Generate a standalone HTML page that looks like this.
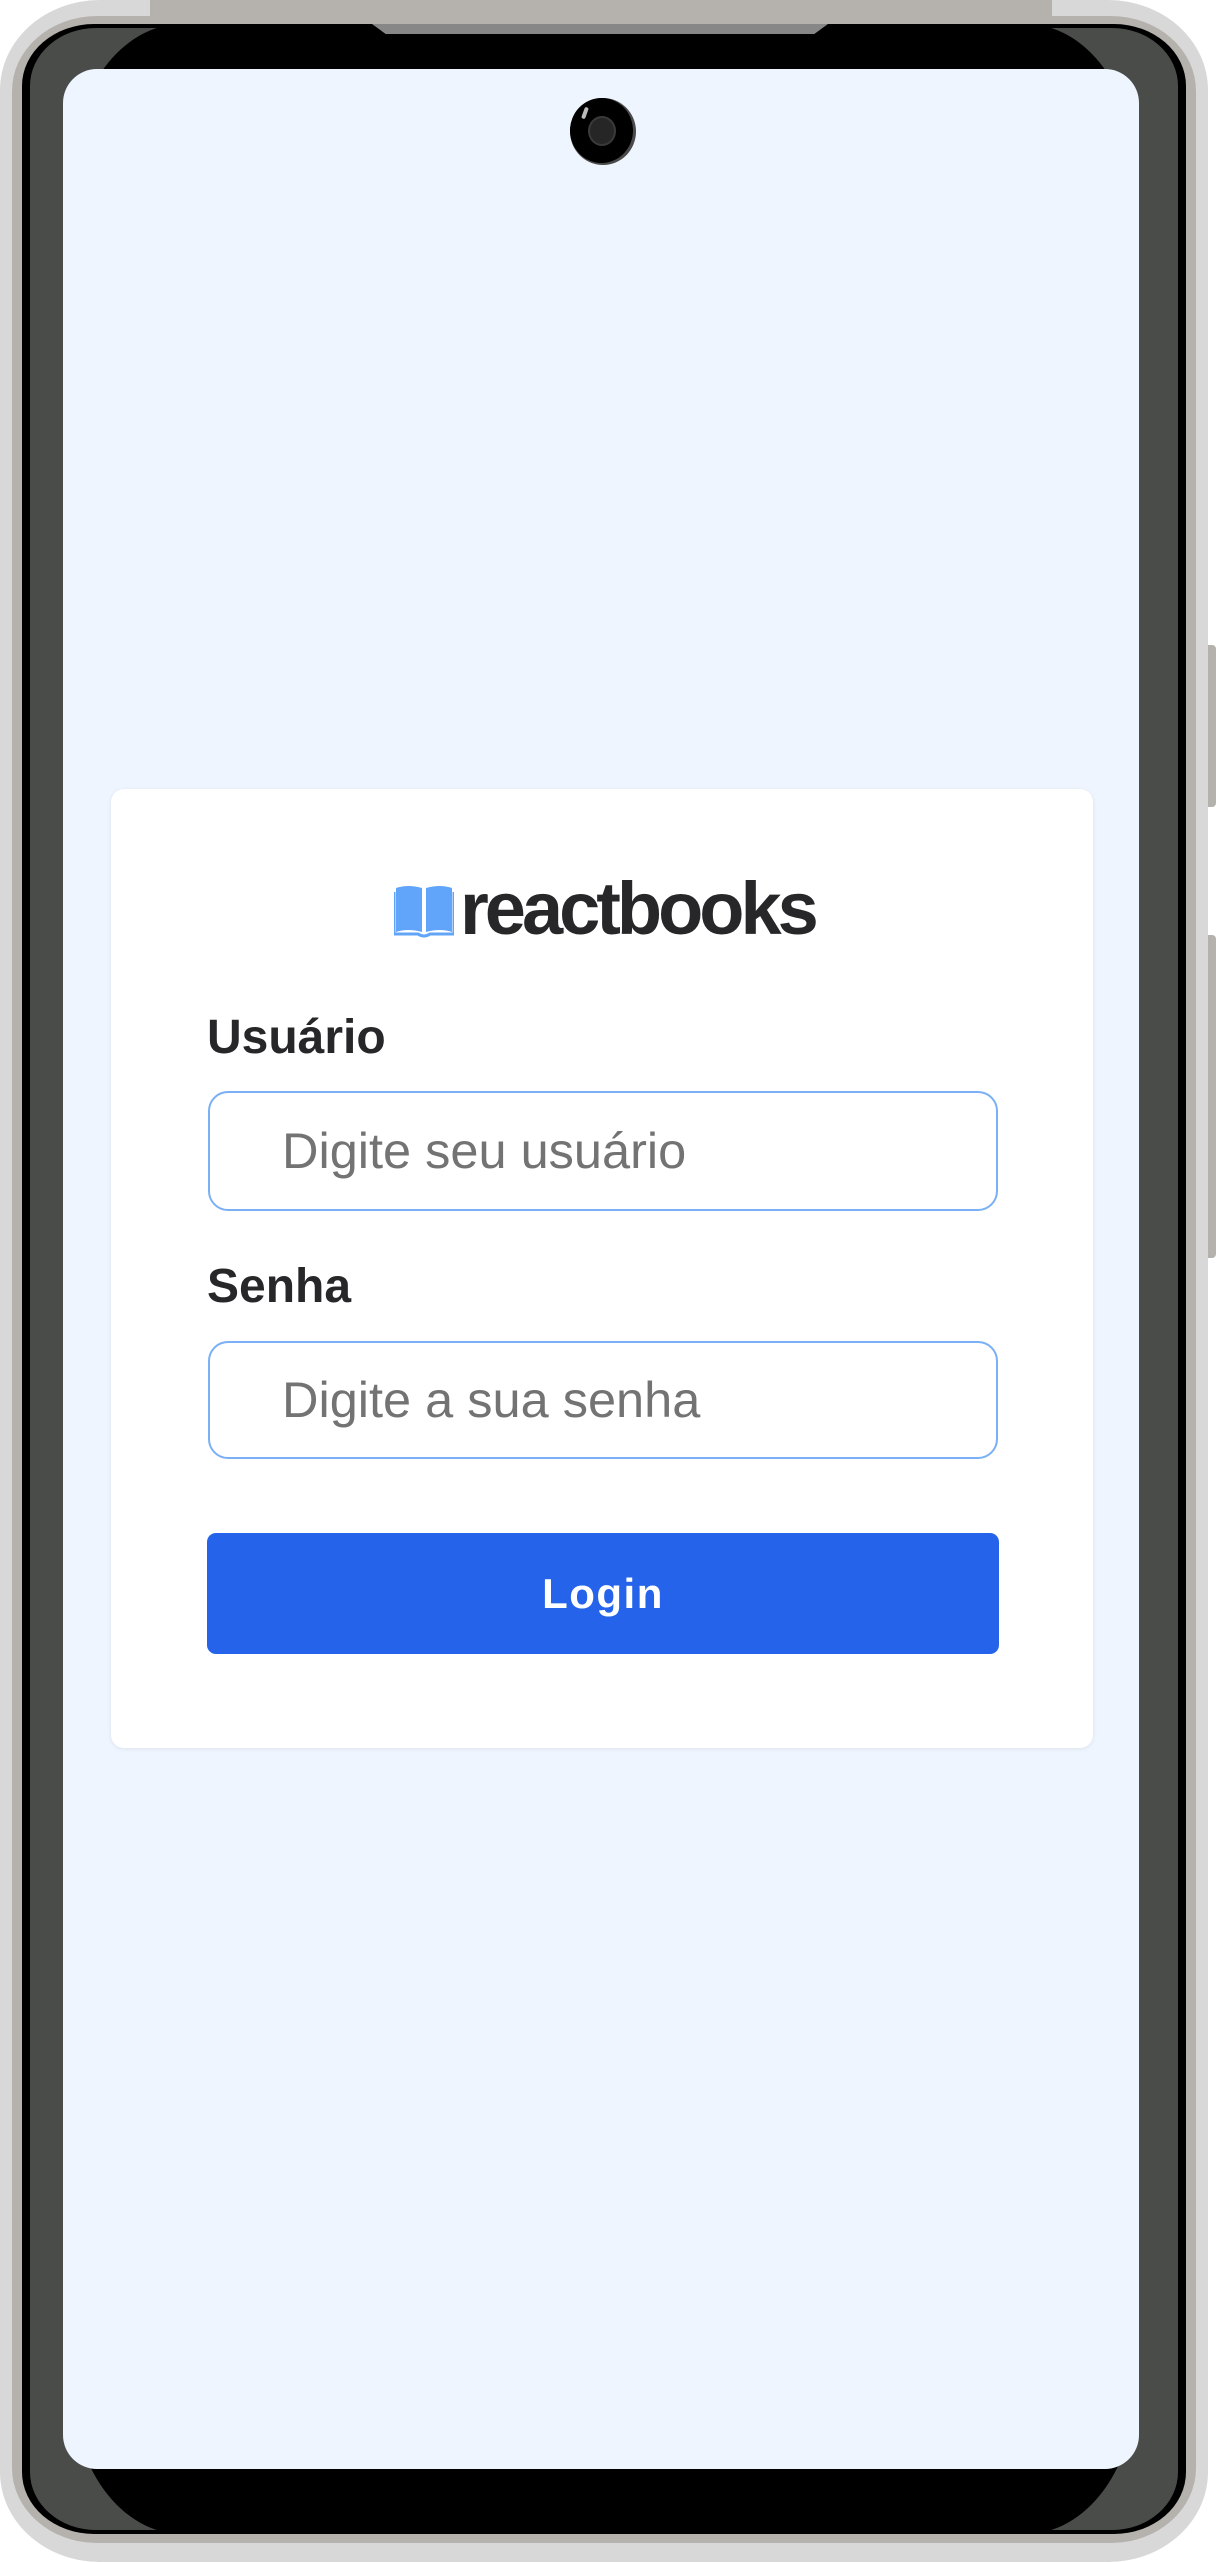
<!DOCTYPE html>
<html><head><meta charset="utf-8"><style>
*{margin:0;padding:0;box-sizing:border-box}
body{width:1216px;height:2562px;background:#fff;position:relative;overflow:hidden;font-family:"Liberation Sans",sans-serif}
.a{position:absolute}
</style></head><body>
<div class="a" style="left:0;top:326px;width:24px;height:2px;background:#ddd"></div>
<div class="a" style="left:0;top:2230px;width:24px;height:2px;background:#ddd"></div>
<div class="a" style="left:1200px;top:645px;width:16px;height:162px;background:#b5b2ae;border-radius:4px"></div>
<div class="a" style="left:1200px;top:935px;width:16px;height:323px;background:#b5b2ae;border-radius:4px"></div>
<div class="a" style="left:0;top:0;width:1208px;height:2562px;background:#d8d8d8;border-radius:100px/90px"></div>
<div class="a" style="left:150px;top:0;width:902px;height:30px;background:#b5b2ae"></div>
<div class="a" style="left:12px;top:16px;width:1184px;height:2527px;background:#b5b2ae;border-radius:85px/75px"></div>
<div class="a" style="left:22px;top:24px;width:1164px;height:2510px;background:#000;border-radius:72px/62px"></div>
<div class="a" style="left:30px;top:28px;width:1148px;height:2502px;background:#4a4c4a;border-radius:66px/58px"></div>
<div class="a" style="left:72px;top:24px;width:1064px;height:2510px;background:#000;border-radius:110px/150px"></div>
<div class="a" style="left:372px;top:24px;width:456px;height:10px;background:#878787;clip-path:polygon(0 0,100% 0,97% 100%,3% 100%)"></div>
<div class="a" style="left:63px;top:69px;width:1076px;height:2400px;background:#eef5ff;border-radius:34px"></div>
<div class="a" style="left:570px;top:98px;width:66px;height:67px;border-radius:50%;background:#4a4a4a"></div>
<div class="a" style="left:570px;top:98px;width:63px;height:65px;border-radius:50%;background:#000"></div>
<div class="a" style="left:588px;top:116px;width:28px;height:30px;border-radius:50%;background:#262626;border:2px solid #3a3a3a"></div>
<div class="a" style="left:583px;top:107px;width:4px;height:12px;border-radius:3px;background:#bbb;transform:rotate(20deg)"></div>

<div class="a" style="left:111px;top:789px;width:982px;height:959px;background:#fff;border-radius:13px;box-shadow:0 1px 4px rgba(0,0,0,.08)"></div>
<svg class="a" style="left:394px;top:884px" width="60" height="54" viewBox="0 0 60 54">
<path d="M2 4 Q14 0 28 4 V48 Q14 44 2 48 Z" fill="#60a5fa"/>
<path d="M32 4 Q46 0 58 4 V48 Q46 44 32 48 Z" fill="#60a5fa"/>
<path d="M0 8 V50 H24 Q30 54 36 50 H60 V8" fill="none" stroke="#60a5fa" stroke-width="3"/>
</svg>
<div class="a" style="left:460px;top:864px;font-size:74px;font-weight:bold;letter-spacing:-4px;color:#27272a;line-height:90px">reactbooks</div>

<div class="a" style="left:207px;top:1008px;font-size:48px;font-weight:bold;color:#27272a;line-height:60px">Usuário</div>
<div class="a" style="left:208px;top:1091px;width:790px;height:120px;border:2px solid #7ab0f5;border-radius:20px;background:#fff"></div>
<div class="a" style="left:282px;top:1121px;font-size:50.5px;color:#737373;line-height:60px">Digite seu usuário</div>

<div class="a" style="left:207px;top:1257px;font-size:48px;font-weight:bold;color:#27272a;line-height:60px">Senha</div>
<div class="a" style="left:208px;top:1341px;width:790px;height:118px;border:2px solid #7ab0f5;border-radius:20px;background:#fff"></div>
<div class="a" style="left:282px;top:1370px;font-size:50.5px;color:#737373;line-height:60px">Digite a sua senha</div>

<div class="a" style="left:207px;top:1533px;width:792px;height:121px;background:#2563eb;border-radius:9px;color:#fff;font-size:42px;font-weight:bold;letter-spacing:1.5px;text-align:center;line-height:121px">Login</div>
</body></html>
